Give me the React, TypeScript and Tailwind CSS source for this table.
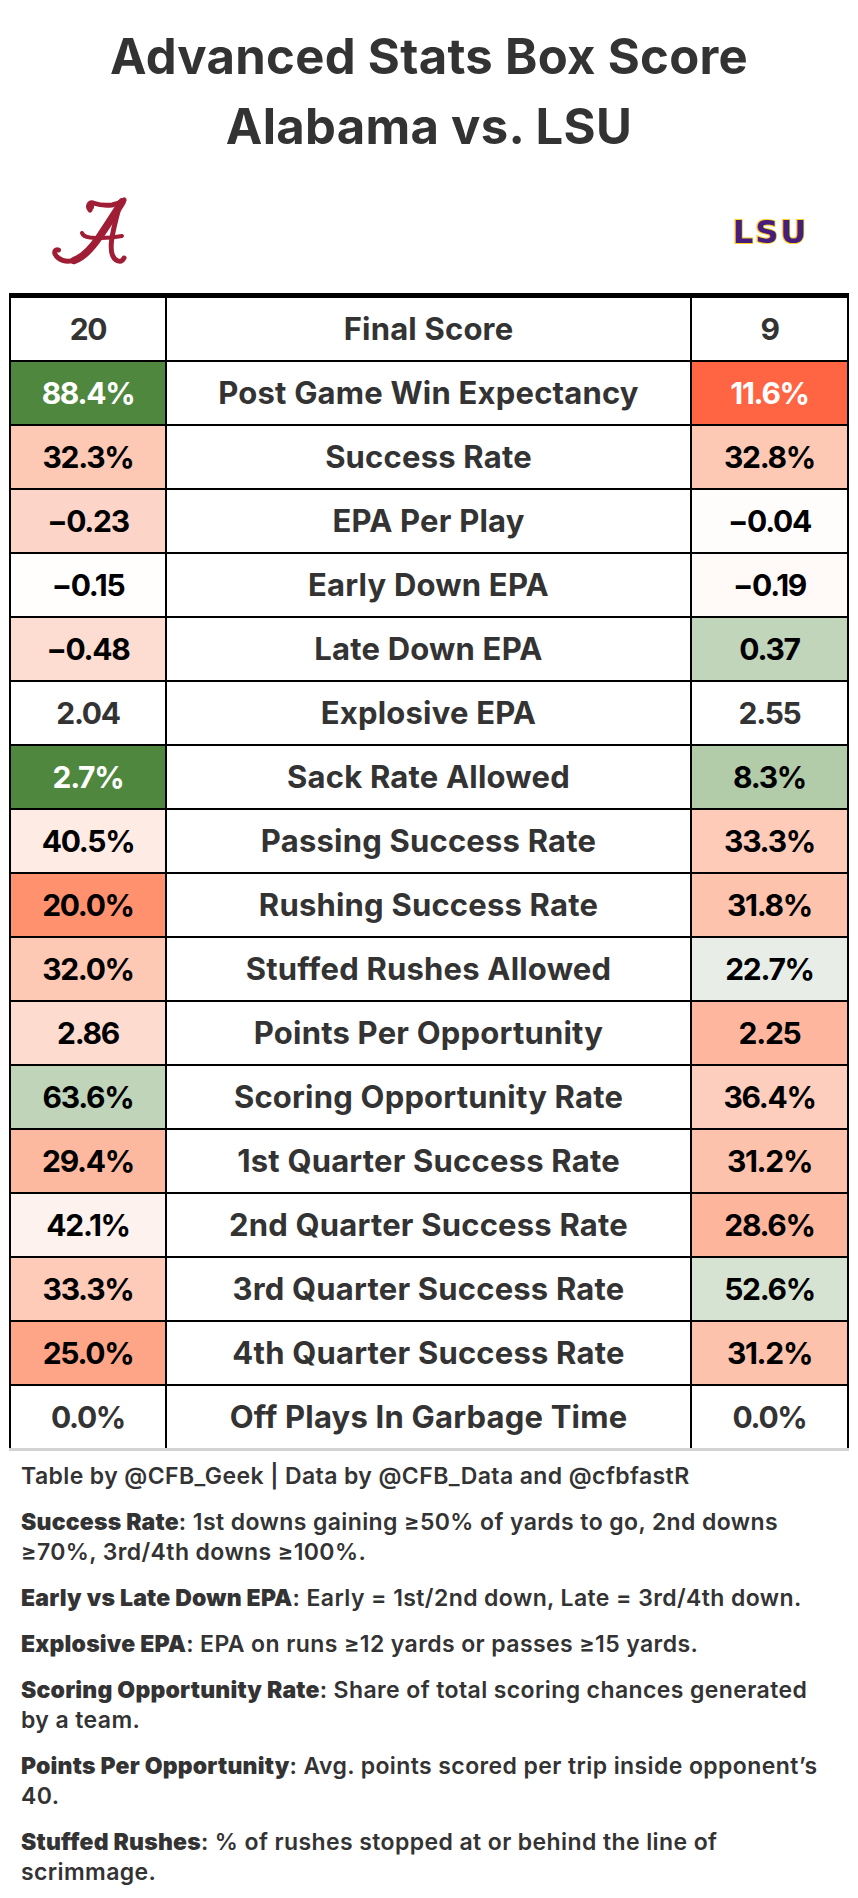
import React from "react";

type Row = { l: string; lc: string; label: string; r: string; rc: string };

const PLAIN = "bg-white text-[#333333]";
const DARK = "text-black";

const rows: Row[] = [
  { l: "88.4%", lc: "bg-[#4E873D] text-white", label: "Post Game Win Expectancy", r: "11.6%", rc: "bg-[#FF6443] text-white" },
  { l: "32.3%", lc: `bg-[#FDC8B4] ${DARK}`, label: "Success Rate", r: "32.8%", rc: `bg-[#FDC9B5] ${DARK}` },
  { l: "\u22120.23", lc: `bg-[#FDD5C8] ${DARK}`, label: "EPA Per Play", r: "\u22120.04", rc: `bg-[#FEFDFC] ${DARK}` },
  { l: "\u22120.15", lc: `bg-[#FFFEFD] ${DARK}`, label: "Early Down EPA", r: "\u22120.19", rc: `bg-[#FFF9F7] ${DARK}` },
  { l: "\u22120.48", lc: `bg-[#FDDDD1] ${DARK}`, label: "Late Down EPA", r: "0.37", rc: `bg-[#C1D5BA] ${DARK}` },
  { l: "2.04", lc: PLAIN, label: "Explosive EPA", r: "2.55", rc: PLAIN },
  { l: "2.7%", lc: "bg-[#4E873D] text-white", label: "Sack Rate Allowed", r: "8.3%", rc: `bg-[#B2CBA9] ${DARK}` },
  { l: "40.5%", lc: `bg-[#FEEBE4] ${DARK}`, label: "Passing Success Rate", r: "33.3%", rc: `bg-[#FDCBB8] ${DARK}` },
  { l: "20.0%", lc: `bg-[#FF916F] ${DARK}`, label: "Rushing Success Rate", r: "31.8%", rc: `bg-[#FDC3AD] ${DARK}` },
  { l: "32.0%", lc: `bg-[#FDC8B4] ${DARK}`, label: "Stuffed Rushes Allowed", r: "22.7%", rc: `bg-[#E8EEE7] ${DARK}` },
  { l: "2.86", lc: `bg-[#FDDBCF] ${DARK}`, label: "Points Per Opportunity", r: "2.25", rc: `bg-[#FEB79E] ${DARK}` },
  { l: "63.6%", lc: `bg-[#BFD4B8] ${DARK}`, label: "Scoring Opportunity Rate", r: "36.4%", rc: `bg-[#FDCEBD] ${DARK}` },
  { l: "29.4%", lc: `bg-[#FDB9A0] ${DARK}`, label: "1st Quarter Success Rate", r: "31.2%", rc: `bg-[#FDC2AC] ${DARK}` },
  { l: "42.1%", lc: `bg-[#FEF2EE] ${DARK}`, label: "2nd Quarter Success Rate", r: "28.6%", rc: `bg-[#FDB59B] ${DARK}` },
  { l: "33.3%", lc: `bg-[#FDCBB8] ${DARK}`, label: "3rd Quarter Success Rate", r: "52.6%", rc: `bg-[#D7E3D2] ${DARK}` },
  { l: "25.0%", lc: `bg-[#FFA587] ${DARK}`, label: "4th Quarter Success Rate", r: "31.2%", rc: `bg-[#FDC2AC] ${DARK}` },
  { l: "0.0%", lc: PLAIN, label: "Off Plays In Garbage Time", r: "0.0%", rc: PLAIN },
];

const notes: { term: string; text: string }[] = [
  { term: "Success Rate", text: ": 1st downs gaining \u226550% of yards to go, 2nd downs \u226570%, 3rd/4th downs \u2265100%." },
  { term: "Early vs Late Down EPA", text: ": Early = 1st/2nd down, Late = 3rd/4th down." },
  { term: "Explosive EPA", text: ": EPA on runs \u226512 yards or passes \u226515 yards." },
  { term: "Scoring Opportunity Rate", text: ": Share of total scoring chances generated by a team." },
  { term: "Points Per Opportunity", text: ": Avg. points scored per trip inside opponent\u2019s 40." },
  { term: "Stuffed Rushes", text: ": % of rushes stopped at or behind the line of scrimmage." },
];

function AlabamaLogo() {
  return (
    <svg width="78" height="68" viewBox="0 0 78 68" fill="none" stroke="#A01E35" strokeLinecap="round" strokeLinejoin="round">
      <path d="M40 13 C37 10 39 5 43 6 C49 8 55 9 62 8 C67 7 71 5 74 3" strokeWidth="5" />
      <circle cx="40.5" cy="9.5" r="3.6" fill="#A01E35" stroke="none" />
      <path d="M72 5 C66 15 58 27 50 39 C42 51 34 60 24 63.5" strokeWidth="7.5" />
      <path d="M25 63 C16 66 8 63 5 57 C4 54 6 52 8.5 53" strokeWidth="5" />
      <path d="M32 36 C33 39 36 40 40 40.5 C50 41.5 62 41 72 39" strokeWidth="4" />
      <path d="M70 7 C67 18 63 32 61.5 44 C60.5 54 62 62 68 64 C71 65 73 63 74 61" strokeWidth="5" />
    </svg>
  );
}

function LsuLogo() {
  return (
    <div className="mr-[-2px] font-['DejaVu_Sans',sans-serif] font-bold text-[32px] leading-none tracking-[2px] text-[#461D7C] [-webkit-text-stroke:2px_#FDD023] [paint-order:stroke_fill]">
      LSU
    </div>
  );
}

const rowBase = "grid grid-cols-[156px_1fr_155px] font-bold";
const numCell = "flex items-center justify-center text-[30px] tracking-[-1.3px]";
const labelCell = "flex items-center justify-center border-r-2 border-black text-[31px] tracking-[0.2px] text-[#333333] bg-white";

export default function App() {
  return (
    <div className="w-[858px] min-h-[1898px] bg-white font-['Inter','Noto_Sans',sans-serif] text-[#333333] px-[9px]">
      <div className="pt-[22px] text-center text-[49px] font-bold leading-[70px] tracking-[0.3px]">
        <div>Advanced Stats Box Score</div>
        <div>Alabama vs. LSU</div>
      </div>

      <div className="grid grid-cols-[160px_1fr_159px] h-[131px] items-center">
        <div className="flex justify-center pt-[6px]">
          <AlabamaLogo />
        </div>
        <div />
        <div className="flex justify-center pt-[8px]">
          <LsuLogo />
        </div>
      </div>

      <div className="border-t-[5px] border-l-2 border-r-2 border-black">
        <div className={`${rowBase} h-[64px] border-b-2 border-black`}>
          <div className={`${numCell} border-r-2 border-black text-[#333333]`}>20</div>
          <div className={labelCell}>Final Score</div>
          <div className={`${numCell} text-[#333333]`}>9</div>
        </div>
        {rows.map((row, i) => (
          <div
            key={row.label}
            className={i === rows.length - 1 ? `${rowBase} h-[62px]` : `${rowBase} h-[64px] border-b-2 border-black`}
          >
            <div className={`${numCell} border-r-2 border-black ${row.lc}`}>{row.l}</div>
            <div className={labelCell}>{row.label}</div>
            <div className={`${numCell} ${row.rc}`}>{row.r}</div>
          </div>
        ))}
      </div>
      <div className="h-[3px] bg-[#D3D3D3]" />

      <div className="px-[12px] pt-[10px] pb-[14px] text-[23px] leading-[30px] tracking-[0.4px] text-[#333333]">
        <p className="font-semibold mb-[16px]">Table by @CFB_Geek | Data by @CFB_Data and @cfbfastR</p>
        {notes.map((n) => (
          <p key={n.term} className="font-semibold mb-[16px]">
            <span className="font-black tracking-[0.2px]">{n.term}</span>
            {n.text}
          </p>
        ))}
      </div>
    </div>
  );
}
